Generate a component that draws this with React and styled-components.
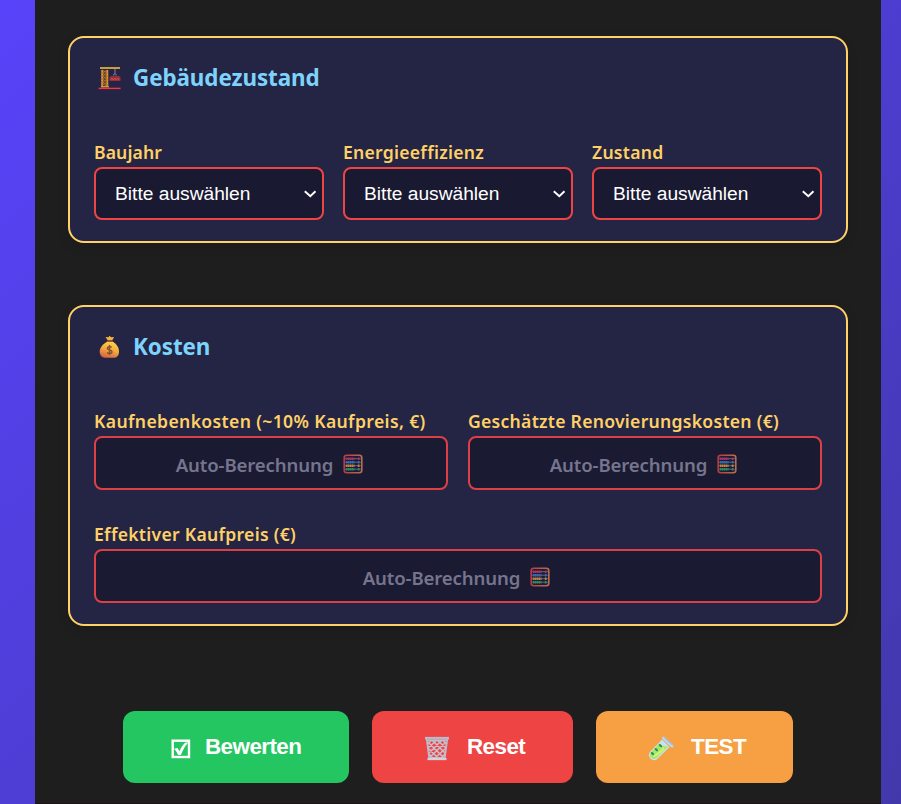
import React from "react";
import styled, { createGlobalStyle } from "styled-components";

const GlobalStyle = createGlobalStyle`
  *, *::before, *::after { box-sizing: border-box; }
  html, body { margin: 0; height: 804px; overflow: hidden; }
  body { background: linear-gradient(135deg, #5843fa 0%, #4338ab 100%); }
`;

const Page = styled.main`
  width: 846px;
  height: 804px;
  margin-left: 35px;
  padding: 36px 33px 0;
  background: #1e1e1e;
  border-bottom: 1px solid #1b1216;
  font-family: "Segoe UI", "Noto Sans", sans-serif;
`;

const Card = styled.section`
  height: ${(p) => p.$height}px;
  padding: 24px;
  background: #242444;
  border: 2px solid #ffd166;
  border-radius: 16px;
  box-shadow: 0 4px 12px rgba(0, 0, 0, 0.1);
  & + & { margin-top: 62px; }
`;

const Heading = styled.h2`
  display: flex;
  align-items: center;
  height: 31px;
  margin: 0 0 45px;
  padding-left: 4px;
  color: #7dd3fc;
  font-size: 22.4px;
  font-weight: 700;
  letter-spacing: -0.07px;
  svg { margin-right: 11px; flex: none; }
`;

const Fields = styled.div`
  display: grid;
  grid-template-columns: repeat(${(p) => p.$columns}, 1fr);
  column-gap: ${(p) => p.$gap}px;
  row-gap: 30px;
`;

const Field = styled.div`
  grid-column: ${(p) => (p.$wide ? "1 / -1" : "auto")};
`;

const Label = styled.label`
  display: block;
  height: 29px;
  line-height: 29px;
  color: #ffd166;
  font-size: 17.6px;
  font-weight: 600;
  white-space: nowrap;
  letter-spacing: ${(p) => p.$tracking || 0}px;
`;

const SelectBox = styled.button`
  display: flex;
  align-items: center;
  justify-content: space-between;
  width: 100%;
  height: 53px;
  padding: 0 5px 0 19px;
  background: #191932;
  color: #fff;
  border: 2px solid #ef4444;
  border-radius: 8px;
  font: 19.2px "Liberation Sans", Arial, sans-serif;
`;

const ResultBox = styled.div`
  display: flex;
  align-items: center;
  justify-content: center;
  gap: 10px;
  height: 54px;
  padding: 2px 3px 0 0;
  background: #1a1a33;
  color: #75758d;
  border: 2px solid #dc4044;
  border-radius: 8px;
  font-size: 18.6px;
  font-weight: 600;
  letter-spacing: -0.13px;
`;

const Actions = styled.div`
  display: flex;
  justify-content: center;
  gap: 23px;
  margin-top: 85px;
`;

const ActionButton = styled.button`
  display: flex;
  align-items: center;
  width: ${(p) => p.$width}px;
  height: 72px;
  padding: 0 0 0 ${(p) => p.$inset}px;
  border: 0;
  border-radius: 12px;
  background: ${(p) => p.$color};
  color: #fff;
  font: bold 22.4px "Liberation Sans", Arial, sans-serif;
  letter-spacing: -0.55px;
  svg { flex: none; margin: 3px ${(p) => p.$gap}px 0 0; }
`;

const Crane = () => (
  <svg width="24" height="24" viewBox="0 0 24 24">
    <path d="M4.2 4v17M9.3 4v17" stroke="#e8a532" strokeWidth="1.8" />
    <path d="M4 4l5.5 3L4 10l5.5 3L4 16l5.5 3L4 21M9.5 4L4 7l5.5 3L4 13l5.5 3L4 19" fill="none" stroke="#b97529" strokeWidth="1.1" />
    <path d="M2 2h20" stroke="#e8b43a" strokeWidth="1.7" />
    <path d="M17 3v5q-1.5 0-1.5 1.5M17 8q1.3 0 1.5 1.5" fill="none" stroke="#777687" strokeWidth="1.2" />
    <path d="M11.5 11l1.5-1h8l1.5 1v4h-11z" fill="#992d3b" />
    <path d="M12.5 14l1.5-2 1 2 2-2 1 2 2-2 1 2" fill="none" stroke="#d0574c" strokeWidth=".8" />
    <path d="M3 20.8h8" stroke="#e0a132" strokeWidth="1.2" />
    <path d="M.6 22.4h22" stroke="#f3344e" strokeWidth="1.4" />
  </svg>
);

const MoneyBag = () => (
  <svg width="24" height="24" viewBox="0 0 24 24">
    <defs>
      <linearGradient id="bag" x1=".7" y1="0" x2=".35" y2="1">
        <stop stopColor="#ffd54b" /><stop offset=".5" stopColor="#f4ab3d" /><stop offset="1" stopColor="#d36442" />
      </linearGradient>
    </defs>
    <path d="M9.5 5L7.5 2l3 .2L11.5.8l1.6 1.4 3-.2-1.7 3z" fill="#f6b33e" />
    <path d="M9.3 6.5h5.3c4 2.4 6.4 6 6.4 10 0 4-2.2 6.2-4.5 6.2H6.9c-3 0-5.2-2.7-5.2-6.2 0-4 3.7-7.8 7.6-10z" fill="url(#bag)" />
    <path d="M9.3 5.8h5.2" stroke="#875239" strokeWidth="1.7" />
    <path d="M13.7 12.4c-.8-1-4.4-1.1-4.4.9 0 2.3 4.7 1.1 4.7 3.5 0 2.2-3.9 2-4.9.7M11.5 10v10" fill="none" stroke="#855031" strokeWidth="1.4" />
  </svg>
);

const Abacus = () => (
  <svg width="20" height="20" viewBox="0 0 20 20">
    <defs><linearGradient id="frame"><stop stopColor="#b93c3f" /><stop offset="1" stopColor="#b96e4c" /></linearGradient></defs>
    <rect x="1.2" y="1.2" width="17.6" height="17.6" rx="2.5" fill="#1d1d39" stroke="url(#frame)" strokeWidth="1.6" />
    {["#af315d", "#306eb5", "#c7853a", "#28915b"].map((color, i) => (
      <g key={color}>
        <path d={`M2.2 ${4.7 + i * 3.5}h15.6`} stroke="#777791" strokeWidth=".8" />
        <path d={`M2.8 ${4.7 + i * 3.5}h8.7M14.8 ${4.7 + i * 3.5}h1.8`} stroke={color} strokeWidth="2.4" strokeDasharray="1.7 .35" />
      </g>
    ))}
  </svg>
);

const Chevron = () => (
  <svg width="14" height="10" viewBox="0 0 14 10">
    <path d="M1.8 2.2L7.3 7.3l5.2-5.1" fill="none" stroke="#fff" strokeWidth="1.9" />
  </svg>
);

const CheckedBox = () => (
  <svg width="20" height="20" viewBox="0 0 20 20">
    <rect x="1.7" y="1.7" width="16.3" height="16.3" fill="none" stroke="#fff" strokeWidth="2.4" />
    <path d="M3 9.8l3.5-.8 2 3.3c1.4-3.5 3.2-6.4 5.8-8.8h3c-3.7 4-5.6 8-7.4 12.6H7.1C6.1 13.9 5 11.7 3 9.8z" fill="#fff" />
  </svg>
);

const Basket = () => (
  <svg width="26" height="26" viewBox="0 0 26 26">
    <path d="M3 4l2.3 18h15.4L23 4z" fill="none" stroke="#bdb9c9" strokeWidth="2" />
    <path d="M4 6l15 15M8 4l13 13M13 4l9 8M18 4l5 4M4 12l10 10M5 18l4 4M22 6L6 21M18 4L5 17M13 4L4 12M8 4L3 8M22 12L11 22M21 18l-4 4" stroke="#c8bfcb" strokeWidth="1.6" />
    <path d="M1 2.2h24" stroke="#c0bbc8" strokeWidth="2.6" />
    <path d="M3.5 23h19" stroke="#d5d0db" strokeWidth="2.3" />
    <path d="M3 3.2h20" stroke="#a9a3b5" strokeWidth=".8" />
  </svg>
);

const TestTube = () => (
  <svg width="26" height="26" viewBox="0 0 26 26">
    <path d="M14 3.5L2.1 15.7c-4 4.5 2.7 11.3 7.2 7.2L21.5 11z" fill="#c6e2f5" />
    <path d="M11.5 7.2L3 16.3c-3.5 3.5 2 9 6 5.5L20 10.5c-2-.7-3.2.8-4.8-.7-1-.9-2-.8-3.7-2.6z" fill="#a7e95b" />
    <path d="M5 20c5-1 8-5 11-8" fill="none" stroke="#caf477" strokeWidth="2.5" />
    <path d="M15.5 2l8.5 8" stroke="#b6dcfa" strokeWidth="3" strokeLinecap="round" />
    <path d="M15.5 1.2L25 9.5" stroke="#83bcf0" strokeWidth="1" />
    <path d="M11.8 9l1.4 1.4M7.7 13l1.4 1.4M3.9 17l1.3 1.3" stroke="#268c72" strokeWidth="2" strokeLinecap="round" />
  </svg>
);

const SelectField = ({ label, tracking }) => (
  <Field>
    <Label $tracking={tracking}>{label}</Label>
    <SelectBox type="button">Bitte auswählen<Chevron /></SelectBox>
  </Field>
);

const ResultField = ({ label, tracking, wide }) => (
  <Field $wide={wide}>
    <Label $tracking={tracking}>{label}</Label>
    <ResultBox><span>Auto-Berechnung</span><Abacus /></ResultBox>
  </Field>
);

export default function App() {
  return (
    <>
      <GlobalStyle />
      <Page>
        <Card $height={207}>
          <Heading><Crane />Gebäudezustand</Heading>
          <Fields $columns={3} $gap={19}>
            <SelectField label="Baujahr" tracking={0.1} />
            <SelectField label="Energieeffizienz" tracking={0.25} />
            <SelectField label="Zustand" tracking={0.25} />
          </Fields>
        </Card>
        <Card $height={321}>
          <Heading><MoneyBag />Kosten</Heading>
          <Fields $columns={2} $gap={20}>
            <ResultField label="Kaufnebenkosten (~10% Kaufpreis, €)" tracking={0.35} />
            <ResultField label="Geschätzte Renovierungskosten (€)" tracking={0.26} />
            <ResultField label="Effektiver Kaufpreis (€)" tracking={0.27} wide />
          </Fields>
        </Card>
        <Actions>
          <ActionButton $width={226} $color="#24c661" $inset={48} $gap={14}><CheckedBox />Bewerten</ActionButton>
          <ActionButton $width={201} $color="#ef4444" $inset={52} $gap={17}><Basket />Reset</ActionButton>
          <ActionButton $width={197} $color="#f69f43" $inset={52} $gap={17}><TestTube />TEST</ActionButton>
        </Actions>
      </Page>
    </>
  );
}
